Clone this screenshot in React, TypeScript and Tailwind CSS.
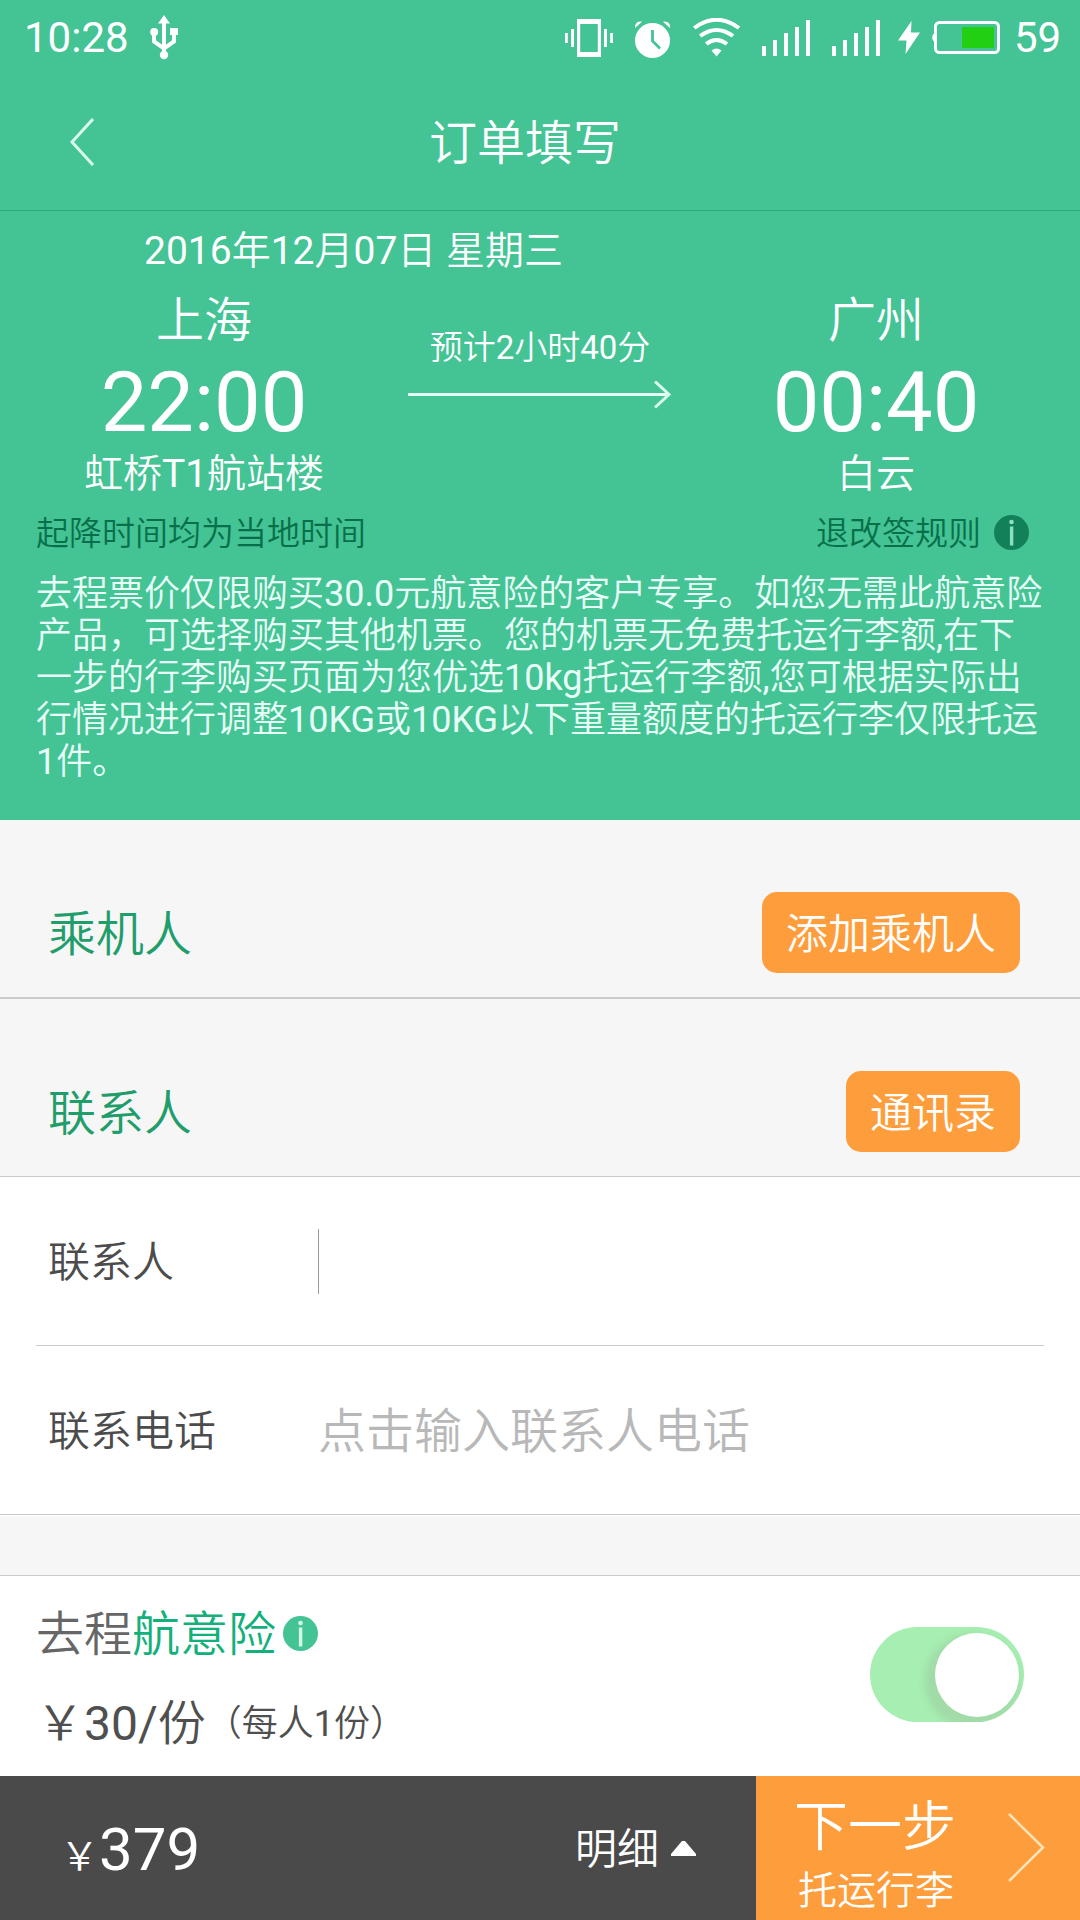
import { useState } from 'react';

type StopProps = {
  city: string;
  time: string;
  terminal: string;
};

const fields = [
  { label: '联系人', placeholder: '', focused: true },
  { label: '联系电话', placeholder: '点击输入联系人电话', focused: false },
];

const notice = [
  '去程票价仅限购买30.0元航意险的客户专享。如您无需此航意险',
  '产品，可选择购买其他机票。您的机票无免费托运行李额,在下',
  '一步的行李购买页面为您优选10kg托运行李额,您可根据实际出',
  '行情况进行调整10KG或10KG以下重量额度的托运行李仅限托运',
  '1件。',
];

const signalBars = [10, 16, 23, 29, 36];

const UsbIcon = () => (
  <svg width="29" height="45" viewBox="0 0 29 45" fill="none">
    <path d="M14 0l6 8.500h-4v28h-4v-28h-4z" fill="white" />
    <path d="M4 18v8.500l10 7 10-7V18" stroke="white" strokeWidth="4" />
    <circle cx="4.200" cy="17" r="4" fill="white" />
    <path d="M20 13h8v7h-8z" fill="white" />
    <circle cx="14" cy="40" r="4.200" fill="white" />
  </svg>
);

const VibrateIcon = () => (
  <svg width="49" height="38" viewBox="0 0 49 38" fill="white">
    <path
      fillRule="evenodd"
      d="M12 0h24v38H12zM15.200 5v28h17.600V5z"
    />
    <path d="M0 14h2.800v10H0zM6 10h3v18H6zM39 10h3v18h-3zM45.200 14H48v10h-2.800z" />
  </svg>
);

const AlarmIcon = () => (
  <svg width="36" height="38" viewBox="0 0 36 38" fill="none">
    <path d="M0 7C-.5 3 2 0 7 .700z" fill="white" />
    <path d="M35 7c.5-4-2-7-7-6.300z" fill="white" />
    <circle cx="17.500" cy="19.500" r="17.500" fill="white" />
    <path d="M17.500 9v11l7.500 7.500" stroke="#44c395" strokeWidth="2.800" />
  </svg>
);

const WifiIcon = () => (
  <svg width="48" height="39" viewBox="0 0 48 39" fill="none">
    <g stroke="white" strokeWidth="4">
      <path d="M1.200 10Q23.500-6.500 46 10" />
      <path d="M7.200 18Q23.500 6 40 18" />
      <path d="M13.200 26Q23.500 18 34 26" />
    </g>
    <path d="M18.500 32.500Q23.500 28.500 28.500 32.500L23.500 38.500z" fill="white" />
  </svg>
);

const SignalIcon = () => (
  <svg width="48" height="36" viewBox="0 0 48 36" fill="white">
    {signalBars.map((h, i) => (
      <rect key={h} x={i * 11} y={36 - h} width="4" height={h} />
    ))}
  </svg>
);

const BoltIcon = () => (
  <svg width="22" height="33" viewBox="0 0 22 33" fill="white">
    <path d="M13.500 0L0 19.500h8.500L7.500 33 22 11.500h-9z" />
  </svg>
);

const BatteryIcon = () => (
  <svg width="68" height="33" viewBox="0 0 68 33" fill="none">
    <rect x="3.500" y="1.500" width="63" height="30" rx="4" stroke="white" strokeWidth="3" />
    <path d="M2.500 12.500C-.5 13-.5 20 2.500 20.500z" fill="white" />
    <rect x="30" y="6" width="32" height="21" fill="#22cf13" />
  </svg>
);

const InfoIcon = ({ fill, stroke }: { fill: string; stroke: string }) => (
  <svg width="35" height="35" viewBox="0 0 35 35">
    <circle cx="17.500" cy="17.500" r="17.500" fill={fill} />
    <circle cx="17.500" cy="7" r="2.300" fill={stroke} />
    <rect x="15.900" y="11.500" width="3.400" height="19" fill={stroke} />
  </svg>
);

const StatusBar = () => (
  <div className="flex justify-between h-[75px] pl-6 pr-5 text-[42px] leading-[75px]">
    <div className="flex">
      <span className="w-[104px] whitespace-nowrap">10:28</span>
      <div className="mt-[15px] ml-[22px]">
        <UsbIcon />
      </div>
    </div>
    <div className="flex">
      <div className="mt-[19px] w-[70px]">
        <VibrateIcon />
      </div>
      <div className="mt-[21px] w-[58px]">
        <AlarmIcon />
      </div>
      <div className="mt-[18px] w-[69px]">
        <WifiIcon />
      </div>
      <div className="mt-5 w-[70px]">
        <SignalIcon />
      </div>
      <div className="mt-5 w-[66px]">
        <SignalIcon />
      </div>
      <div className="mt-[21px] w-[34px]">
        <BoltIcon />
      </div>
      <div className="mt-[21px] w-[82px]">
        <BatteryIcon />
      </div>
      <span className="w-[46px]">59</span>
    </div>
  </div>
);

const TitleBar = () => (
  <header className="flex h-[136px] border-b border-[#2fa67d]">
    <button className="mt-[43px] ml-[70px] h-12 w-[359px]">
      <svg width="25" height="48" viewBox="0 0 25 48" fill="none">
        <path d="M23 1L2 24l21 23" stroke="#d9fbee" strokeWidth="3" />
      </svg>
    </button>
    <h1 className="text-[48px] leading-[138px]">订单填写</h1>
  </header>
);

const Stop = ({ city, time, terminal }: StopProps) => (
  <div className="w-[408px] text-center">
    <div className="h-[61px] text-[48px] leading-[61px]">{city}</div>
    <div className="h-[104px] text-[83px] leading-[104px]">{time}</div>
    <div className="h-[37px] text-[39px] leading-[39px]">{terminal}</div>
  </div>
);

const FlightInfo = () => (
  <section className="h-[609px]">
    <p className="pl-36 h-[79px] text-[39px] leading-[80px]">
      2016年12月07日 星期三
    </p>
    <div className="flex h-[202px]">
      <Stop city="上海" time="22:00" terminal="虹桥T1航站楼" />
      <div className="pt-[37px] w-[264px]">
        <div className="text-[33px] text-center leading-[42px]">预计2小时40分</div>
        <svg className="mt-3" width="264" height="28" viewBox="0 0 264 28" fill="none">
          <path d="M0 13.500h261" stroke="#e6fff6" strokeWidth="3" />
          <path d="M247 .500l14 13-14 13" stroke="#d9fbee" strokeWidth="3" />
        </svg>
      </div>
      <Stop city="广州" time="00:40" terminal="白云" />
    </div>
    <div className="flex justify-between items-center pt-[3px] pr-[51px] pl-9 h-[81px] text-[#07704a] text-[33px]">
      <span>起降时间均为当地时间</span>
      <div className="flex items-center gap-[13px]">
        <span>退改签规则</span>
        <div className="-mt-[3px]">
          <InfoIcon fill="#12815a" stroke="#8be0c0" />
        </div>
      </div>
    </div>
    <div className="pl-9 text-[#e8fff7] text-[36px] leading-[42px] whitespace-nowrap">
      {notice.map((line) => (
        <p key={line}>{line}</p>
      ))}
    </div>
  </section>
);

const OrderForm = () => (
  <main>
    <div className="flex justify-between items-center pt-12 pr-[60px] pl-12 border-[#c9cbca] border-b-2 h-[179px]">
      <h2 className="pt-1 text-[#1f9d6b] text-[48px] leading-[60px]">乘机人</h2>
      <button className="bg-[#fe9d3b] pt-[3px] rounded-[15px] w-[258px] h-[81px] text-[42px] text-white">
        添加乘机人
      </button>
    </div>
    <div className="flex justify-between items-center pt-12 pr-[60px] pl-12 border-[#c9cbca] border-b h-[178px]">
      <h2 className="pt-1 text-[#1f9d6b] text-[48px] leading-[60px]">联系人</h2>
      <button className="bg-[#fe9d3b] pt-[3px] rounded-[15px] w-[174px] h-[81px] text-[42px] text-white">
        通讯录
      </button>
    </div>

    <div className="bg-white border-[#c9cbca] border-b">
      {fields.map(({ label, placeholder, focused }) => (
        <div key={label} className="group">
          <div className="flex items-center pl-12 h-[168px]">
            <label className="pt-[3px] w-[270px] text-[#4c4c4c] text-[42px]">{label}</label>
            {focused && <span className="bg-[#9a9a9a] w-px h-[65px]" />}
            <span className="pt-[3px] text-[#b8b8b8] text-[48px]">{placeholder}</span>
          </div>
          <div className="group-last:hidden bg-[#c9cbca] mx-9 h-px" />
        </div>
      ))}
    </div>
    <div className="border-[#fafafa] border-t-2 h-[60px]" />
  </main>
);

const Insurance = () => {
  const [checked, setChecked] = useState(true);

  return (
    <section className="flex justify-between bg-white pr-[56px] pl-9 border-[#c9cbca] border-t h-[201px]">
      <div>
        <div className="flex items-center h-[115px] text-[48px] text-[#666]">
          <span className="pt-[3px]">去程</span>
          <span className="pt-[3px] text-[#14b07c]">航意险</span>
          <div className="ml-[7px]">
            <InfoIcon fill="#44c395" stroke="#d4f7e9" />
          </div>
        </div>
        <div className="flex items-center pt-[5px] h-[60px] text-[#4f4f4f] text-[48px] leading-[60px]">
          <span>￥30/份</span>
          <span className="text-[36px]">（每人1份）</span>
        </div>
      </div>
      <button
        role="switch"
        aria-checked={checked}
        onClick={() => setChecked(!checked)}
        className={`flex items-center mt-[51px] px-[5px] rounded-full w-[154px] h-[95px] overflow-hidden ${
          checked ? 'justify-end bg-[#a6eeb1]' : 'justify-start bg-gray-200'
        }`}
      >
        <span className="bg-white shadow-[-5px_6px_6px_5px_rgba(150,175,150,0.3)] rounded-full size-[84px]" />
      </button>
    </section>
  );
};

const BottomBar = () => (
  <footer className="flex bg-[#4a4a4a] h-36 text-white">
    <div className="flex justify-between w-[756px]">
      <div className="pl-[60px] text-[60px] leading-[148px]">
        <span className="text-[39px]">￥</span>379
      </div>
      <div className="flex items-center gap-3 pr-[60px] text-[42px]">
        <span className="pt-[3px]">明细</span>
        <svg width="25" height="15" viewBox="0 0 25 15" fill="white">
          <path d="M11 0h3l11 13v2H0v-2z" />
        </svg>
      </div>
    </div>
    <button className="flex justify-between bg-[#fe9d3b] pr-[35px] pl-[38px] w-[324px] text-left">
      <div>
        <div className="mt-4 h-[70px] text-[54px] leading-[71px]">下一步</div>
        <div className="pl-1 h-[56px] text-[39px] leading-[58px]">托运行李</div>
      </div>
      <svg className="mt-[37px]" width="37" height="69" viewBox="0 0 37 69" fill="none">
        <path d="M1 1l34 33.500L1 68" stroke="#ffe3b8" strokeWidth="2.500" />
      </svg>
    </button>
  </footer>
);

const App = () => {
  return (
    <div className="bg-[#f6f6f6] w-[1080px] h-[1920px] overflow-hidden font-['Roboto','Noto_Sans_CJK_SC_DemiLight','Noto_Sans_CJK_SC',sans-serif]">
      <div className="bg-[#44c395] text-white">
        <StatusBar />
        <TitleBar />
        <FlightInfo />
      </div>
      <OrderForm />
      <Insurance />
      <BottomBar />
    </div>
  );
};

export default App;
